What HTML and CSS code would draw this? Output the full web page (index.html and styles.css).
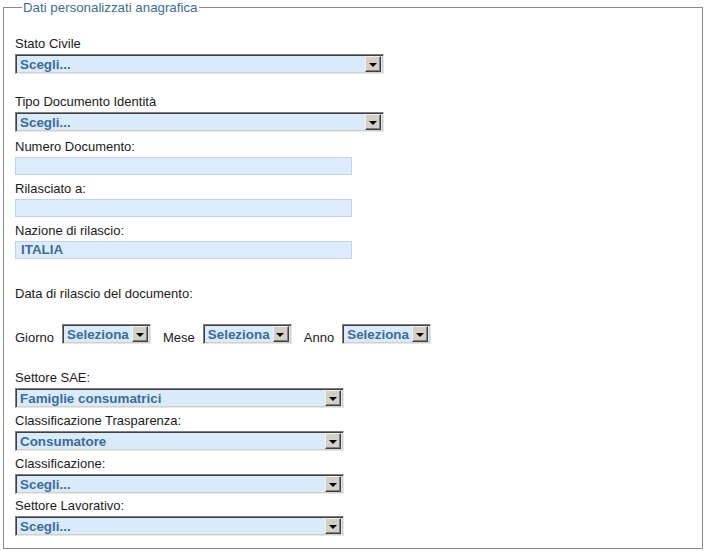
FILE: index.html
```html
<!DOCTYPE html>
<html lang="it">
<head>
<meta charset="utf-8">
<title>Dati personalizzati anagrafica</title>
<link rel="stylesheet" href="styles.css">
</head>
<body>
<fieldset class="box">
  <legend class="legend">Dati personalizzati anagrafica</legend>

  <div class="field first">
    <div class="label">Stato Civile</div>
    <div class="select w368"><span class="val">Scegli...</span><span class="btn"><i class="tri"></i></span></div>
  </div>

  <div class="field gap-big">
    <div class="label">Tipo Documento Identità</div>
    <div class="select w368"><span class="val">Scegli...</span><span class="btn"><i class="tri"></i></span></div>
  </div>

  <div class="field gap-7">
    <div class="label">Numero Documento:</div>
    <div class="input"></div>
  </div>

  <div class="field gap-6">
    <div class="label">Rilasciato a:</div>
    <div class="input"></div>
  </div>

  <div class="field gap-6">
    <div class="label">Nazione di rilascio:</div>
    <div class="input"><span class="val">ITALIA</span></div>
  </div>

  <div class="field gap-date">
    <div class="label">Data di rilascio del documento:</div>
  </div>

  <div class="daterow">
    <span class="dlabel">Giorno</span>
    <div class="select wdate"><span class="val">Seleziona</span><span class="btn"><i class="tri"></i></span></div>
    <span class="dlabel sp">Mese</span>
    <div class="select wdate"><span class="val">Seleziona</span><span class="btn"><i class="tri"></i></span></div>
    <span class="dlabel sp">Anno</span>
    <div class="select wdate"><span class="val">Seleziona</span><span class="btn"><i class="tri"></i></span></div>
  </div>

  <div class="field gap-sae">
    <div class="label">Settore SAE:</div>
    <div class="select w328"><span class="val">Famiglie consumatrici</span><span class="btn"><i class="tri"></i></span></div>
  </div>

  <div class="field">
    <div class="label">Classificazione Trasparenza:</div>
    <div class="select w328"><span class="val">Consumatore</span><span class="btn"><i class="tri"></i></span></div>
  </div>

  <div class="field">
    <div class="label">Classificazione:</div>
    <div class="select w328"><span class="val">Scegli...</span><span class="btn"><i class="tri"></i></span></div>
  </div>

  <div class="field gap-4">
    <div class="label">Settore Lavorativo:</div>
    <div class="select w328"><span class="val">Scegli...</span><span class="btn"><i class="tri"></i></span></div>
  </div>
</fieldset>
</body>
</html>
```
FILE: styles.css
```css
html, body {
  margin: 0;
  padding: 0;
  background: #ffffff;
}
body {
  font-family: "Liberation Sans", Arial, sans-serif;
  font-size: 13px;
  color: #1a1a1a;
}
.box {
  box-sizing: border-box;
  width: 700px;
  height: 549px;
  margin: 0 0 0 3px;
  padding: 7px 11px 10px 11px;
  border: 1px solid #8a8a8a;
}
.legend {
  margin-left: 7px;
  padding: 0 2px 0 1px;
  color: #3b6e93;
  font-size: 13.3px;
  line-height: 15px;
}
.field {
  display: flex;
  flex-direction: column;
  align-items: flex-start;
  margin-top: 5px;
}
.field.first { margin-top: 14px; }
.field.gap-big { margin-top: 20px; }
.field.gap-7 { margin-top: 7px; }
.field.gap-6 { margin-top: 6px; }
.field.gap-4 { margin-top: 4px; }
.field.gap-date { margin-top: 27px; }
.field.gap-sae { margin-top: 26px; }
.label {
  line-height: 15px;
  height: 15px;
  margin-bottom: 3px;
  white-space: nowrap;
}
.select {
  box-sizing: border-box;
  display: flex;
  align-items: center;
  height: 20px;
  background: #d9eafb;
  border: 1px solid;
  border-color: #7f7f7f #e6e6e6 #e6e6e6 #7f7f7f;
  box-shadow: inset 1px 1px 0 #404040, inset -1px -1px 0 #d4d0c8;
  padding: 0 2px 0 4px;
}
.w368 { width: 369px; }
.w328 { width: 329px; }
.wdate { width: 89px; }
.val {
  flex: 1;
  font-weight: bold;
  color: #3b6c9e;
  font-size: 13.4px;
  line-height: 16px;
  padding-top: 1px;
  white-space: nowrap;
  overflow: hidden;
}
.btn {
  box-sizing: border-box;
  width: 16px;
  height: 16px;
  background: #d4d0c8;
  border: 1px solid;
  border-color: #f0f0f0 #404040 #404040 #f0f0f0;
  box-shadow: inset -1px -1px 0 #808080;
  display: flex;
  align-items: center;
  justify-content: center;
}
.tri {
  width: 0;
  height: 0;
  border-left: 4px solid transparent;
  border-right: 4px solid transparent;
  border-top: 4px solid #000;
  margin: 1px 1px 0 0;
}
.input {
  box-sizing: border-box;
  width: 337px;
  height: 18px;
  background: #dcecfd;
  border: 1px solid #bcd4ee;
  padding: 0 5px;
  display: flex;
  align-items: center;
}
.input .val { padding-top: 0; }
.daterow {
  display: flex;
  align-items: flex-end;
  margin-top: 20px;
}
.dlabel {
  line-height: 15px;
  margin-right: 8px;
  margin-bottom: -1px;
}
.dlabel.sp { margin-left: 12px; }
```
